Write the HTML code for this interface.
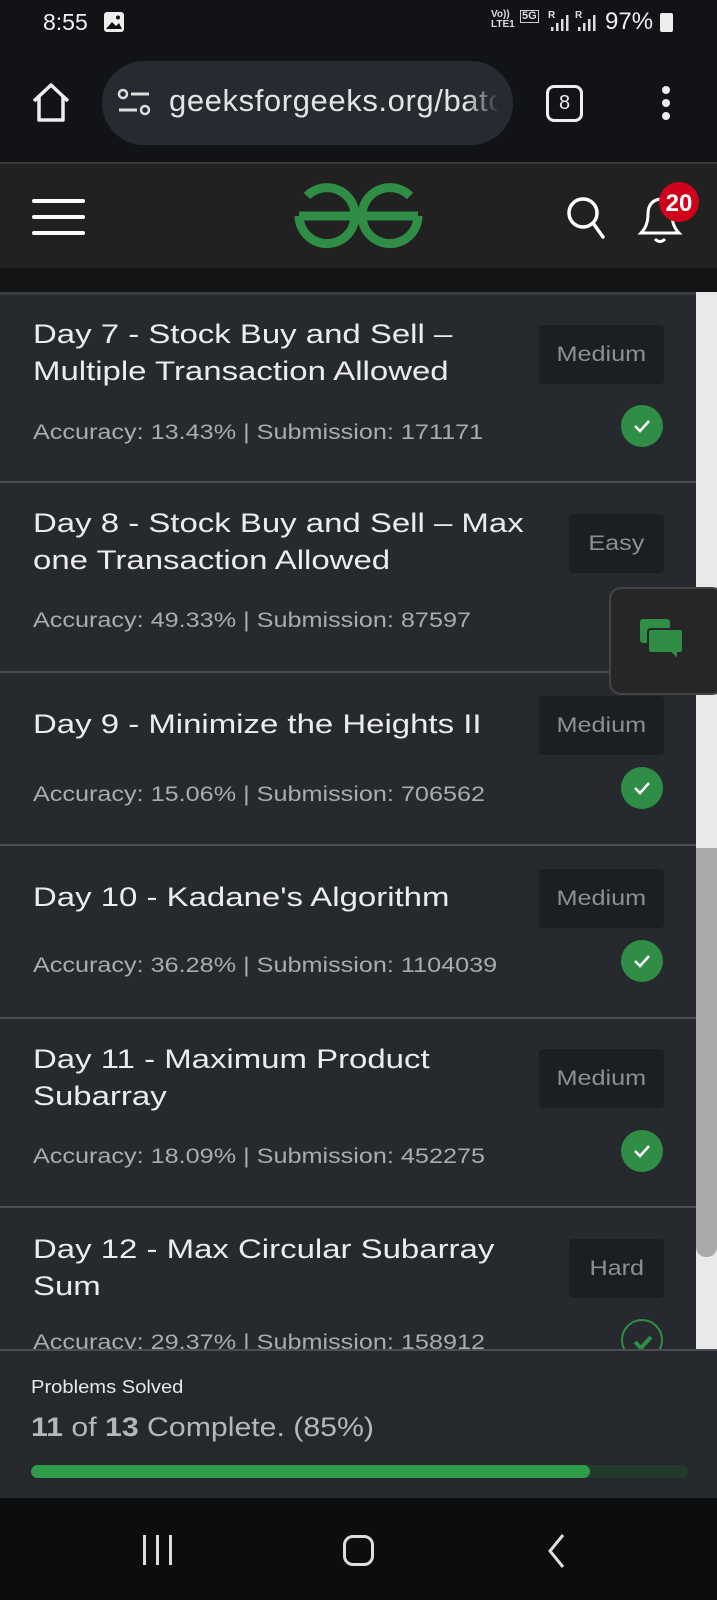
<!DOCTYPE html>
<html><head><meta charset="utf-8"><style>
*{margin:0;padding:0;box-sizing:border-box}
body{width:717px;height:1600px;background:#131416;position:relative;overflow:hidden;font-family:"Liberation Sans",sans-serif;color:#e6e6e6}
.abs{position:absolute}
.card{position:absolute;left:0;width:696px;background:#262a2f;border-bottom:2px solid #4a4d52}
.t{position:absolute;left:33px;font-size:27px;line-height:37px;color:#ececec;white-space:nowrap;transform:scaleX(1.22);transform-origin:0 0}
.acc{position:absolute;left:33px;font-size:21px;color:#a9abae;white-space:nowrap;transform:scaleX(1.2);transform-origin:0 0}
.badge{position:absolute;background:#1b1e22;border-radius:4px;color:#8c8f93;font-size:21px;display:flex;align-items:center;justify-content:center;height:59px}
.badge span{display:inline-block;transform:scaleX(1.2)}
.chk{position:absolute;width:42px;height:42px;border-radius:50%;background:#2f8d46;left:621px}
.chk svg{position:absolute;left:0;top:0}
</style></head><body>
<!-- status bar -->
<div class="abs" style="left:0;top:0;width:717px;height:46px;background:#111316"></div>
<div class="abs" style="left:43px;top:9px;font-size:23px;color:#f0f0f0">8:55</div>
<svg class="abs" style="left:103px;top:11px" width="22" height="22"><rect x="1" y="1" width="20" height="20" rx="3" fill="#eee"/><path d="M3 18 L9 11 L13 15 L16 12 L19 18Z" fill="#111"/><circle cx="15" cy="6.5" r="2" fill="#111"/></svg>
<div class="abs" style="left:491px;top:10px;font-size:10px;line-height:10px;color:#ddd;font-weight:bold">Vo))<br>LTE1</div>
<div class="abs" style="left:520px;top:10px;font-size:11px;color:#ddd;border:1px solid #ccc;line-height:11px;padding:0 1px;font-weight:bold">5G</div>
<div class="abs" style="left:548px;top:10px;font-size:10px;color:#ddd;font-weight:bold">R</div>
<svg class="abs" style="left:549px;top:14px" width="20" height="18"><rect x="2" y="13" width="2.5" height="4" fill="#ddd"/><rect x="7" y="9" width="2.5" height="8" fill="#ddd"/><rect x="12" y="5" width="2.5" height="12" fill="#ddd"/><rect x="17" y="1" width="2.5" height="16" fill="#ddd"/></svg>
<div class="abs" style="left:575px;top:10px;font-size:10px;color:#ddd;font-weight:bold">R</div>
<svg class="abs" style="left:576px;top:14px" width="20" height="18"><rect x="2" y="13" width="2.5" height="4" fill="#ddd"/><rect x="7" y="9" width="2.5" height="8" fill="#ddd"/><rect x="12" y="5" width="2.5" height="12" fill="#ddd"/><rect x="17" y="1" width="2.5" height="16" fill="#ddd"/></svg>
<div class="abs" style="left:605px;top:8px;font-size:24px;color:#f0f0f0">97%</div>
<div class="abs" style="left:660px;top:13px;width:13px;height:19px;background:#eee;border-radius:2px"></div>
<!-- browser bar -->
<div class="abs" style="left:0;top:46px;width:717px;height:116px;background:#111316"></div>
<svg class="abs" style="left:30px;top:82px" width="42" height="42"><path d="M4 19 L21 3 L38 19 M9 15 V38 H33 V15" fill="none" stroke="#eee" stroke-width="3.5" stroke-linejoin="round"/></svg>
<div class="abs" style="left:102px;top:61px;width:411px;height:84px;border-radius:42px;background:#262a31"></div>
<svg class="abs" style="left:117px;top:88px" width="36" height="30"><circle cx="6" cy="6" r="4" fill="none" stroke="#ddd" stroke-width="2.5"/><path d="M14 6 H32 M2 22 H20" stroke="#ddd" stroke-width="3"/><circle cx="28" cy="22" r="4" fill="none" stroke="#ddd" stroke-width="2.5"/></svg>
<div class="abs" style="left:169px;top:83px;width:330px;overflow:hidden;white-space:nowrap;font-size:31px;letter-spacing:0.6px;color:#e4e4e4;-webkit-mask-image:linear-gradient(90deg,#000 90%,transparent)">geeksforgeeks.org/batch</div>
<div class="abs" style="left:546px;top:85px;width:37px;height:37px;border:3.5px solid #eee;border-radius:8px;color:#eee;font-size:20px;text-align:center;line-height:30px">8</div>
<div class="abs" style="left:662px;top:86px;width:8px;height:8px;border-radius:50%;background:#eee"></div>
<div class="abs" style="left:662px;top:99px;width:8px;height:8px;border-radius:50%;background:#eee"></div>
<div class="abs" style="left:662px;top:112px;width:8px;height:8px;border-radius:50%;background:#eee"></div>
<!-- gfg header -->
<div class="abs" style="left:0;top:162px;width:717px;height:2px;background:#3a3b3e"></div>
<div class="abs" style="left:0;top:164px;width:717px;height:104px;background:#212121"></div>
<div class="abs" style="left:32px;top:199px;width:53px;height:4px;background:#fff;border-radius:2px"></div>
<div class="abs" style="left:32px;top:215px;width:53px;height:4px;background:#fff;border-radius:2px"></div>
<div class="abs" style="left:32px;top:231px;width:53px;height:4px;background:#fff;border-radius:2px"></div>
<svg class="abs" style="left:0;top:0" width="717" height="270"><g fill="none" stroke="#2f8d46" stroke-width="9"><path d="M307,196 A28,28 0 1 1 299,216"/><path d="M410,196 A28,28 0 1 0 418,216"/><path d="M299,216 H418"/></g>
<circle cx="583" cy="213" r="14" fill="none" stroke="#fff" stroke-width="3.5"/><path d="M593 223 L603 237" stroke="#fff" stroke-width="3.5" stroke-linecap="round"/>
<path d="M641 233 Q648 226 648 214 Q648 201 660 199 Q672 201 672 214 Q672 226 679 233 Z" fill="none" stroke="#fff" stroke-width="3"/><path d="M655 239 Q660 244 665 239" fill="none" stroke="#fff" stroke-width="3"/>
<circle cx="679" cy="202" r="20" fill="#d0021b"/><text x="679" y="211" font-family="Liberation Sans" font-weight="bold" font-size="24" fill="#fff" text-anchor="middle">20</text></svg>
<!-- cards -->
<div class="card" style="top:292px;height:191px;border-top:3px solid #3a3d41"></div>
<div class="t" style="top:316px">Day 7 - Stock Buy and Sell –<br>Multiple Transaction Allowed</div>
<div class="badge" style="left:539px;top:325px;width:125px"><span>Medium</span></div>
<div class="acc" style="top:421px">Accuracy: 13.43% | Submission: 171171</div>
<div class="chk" style="left:621px;top:405px"><svg width="42" height="42"><path d="M14 21 L19 26 L28 16" fill="none" stroke="#fff" stroke-width="2.5"/></svg></div>

<div class="card" style="top:483px;height:190px"></div>
<div class="t" style="top:505px">Day 8 - Stock Buy and Sell – Max<br>one Transaction Allowed</div>
<div class="badge" style="left:569px;top:514px;width:95px"><span>Easy</span></div>
<div class="acc" style="top:609px">Accuracy: 49.33% | Submission: 87597</div>

<div class="card" style="top:673px;height:173px"></div>
<div class="t" style="top:706px">Day 9 - Minimize the Heights II</div>
<div class="badge" style="left:539px;top:696px;width:125px"><span>Medium</span></div>
<div class="acc" style="top:783px">Accuracy: 15.06% | Submission: 706562</div>
<div class="chk" style="top:767px"><svg width="42" height="42"><path d="M14 21 L19 26 L28 16" fill="none" stroke="#fff" stroke-width="2.5"/></svg></div>

<div class="card" style="top:846px;height:173px"></div>
<div class="t" style="top:879px">Day 10 - Kadane's Algorithm</div>
<div class="badge" style="left:539px;top:869px;width:125px"><span>Medium</span></div>
<div class="acc" style="top:954px">Accuracy: 36.28% | Submission: 1104039</div>
<div class="chk" style="top:940px"><svg width="42" height="42"><path d="M14 21 L19 26 L28 16" fill="none" stroke="#fff" stroke-width="2.5"/></svg></div>

<div class="card" style="top:1019px;height:189px"></div>
<div class="t" style="top:1041px">Day 11 - Maximum Product<br>Subarray</div>
<div class="badge" style="left:539px;top:1049px;width:125px"><span>Medium</span></div>
<div class="acc" style="top:1145px">Accuracy: 18.09% | Submission: 452275</div>
<div class="chk" style="top:1130px"><svg width="42" height="42"><path d="M14 21 L19 26 L28 16" fill="none" stroke="#fff" stroke-width="2.5"/></svg></div>

<div class="card" style="top:1208px;height:160px;border:none"></div>
<div class="t" style="top:1231px">Day 12 - Max Circular Subarray<br>Sum</div>
<div class="badge" style="left:569px;top:1239px;width:95px"><span>Hard</span></div>
<div class="acc" style="top:1331px">Accuracy: 29.37% | Submission: 158912</div>
<div class="abs" style="left:621px;top:1319px;width:42px;height:42px;border-radius:50%;border:2px solid #2f8d46"><svg width="40" height="40"><path d="M12 21 L18 27 L28 16" fill="none" stroke="#2f8d46" stroke-width="4"/></svg></div>
<!-- scrollbar -->
<div class="abs" style="left:696px;top:292px;width:21px;height:1057px;background:#e9e9e9"></div>
<div class="abs" style="left:696px;top:848px;width:21px;height:409px;background:#a9a9a9;border-radius:0 0 10px 10px"></div>
<!-- chat widget -->
<div class="abs" style="left:609px;top:587px;width:115px;height:108px;background:#262626;border:2px solid #444;border-radius:12px"></div>
<svg class="abs" style="left:638px;top:615px" width="50" height="50"><rect x="2" y="4" width="30" height="24" rx="3" fill="#2f8d46"/><path d="M13 14 h29 a3 3 0 0 1 3 3 v18 a3 3 0 0 1 -3 3 h-2 v7 l-7 -7 h-20 a3 3 0 0 1 -3 -3 v-18 a3 3 0 0 1 3 -3z" fill="#2f8d46" stroke="#262626" stroke-width="2"/></svg>
<!-- bottom panel -->
<div class="abs" style="left:0;top:1349px;width:717px;height:149px;background:#25282c;border-top:2px solid #4a4d52"></div>
<div class="abs" style="left:31px;top:1377px;font-size:18px;color:#e8e8e8;white-space:nowrap;transform:scaleX(1.12);transform-origin:0 0">Problems Solved</div>
<div class="abs" style="left:31px;top:1412px;font-size:27px;color:#b5b7ba;white-space:nowrap;transform:scaleX(1.12);transform-origin:0 0"><b>11</b> of <b>13</b> Complete. (85%)</div>
<div class="abs" style="left:31px;top:1465px;width:657px;height:13px;border-radius:7px;background:#213a2a"></div>
<div class="abs" style="left:31px;top:1465px;width:559px;height:13px;border-radius:7px;background:#2f9c4a"></div>
<!-- nav bar -->
<div class="abs" style="left:0;top:1498px;width:717px;height:102px;background:#0b0d0f"></div>
<div class="abs" style="left:143px;top:1535px;width:3px;height:30px;background:#ddd"></div>
<div class="abs" style="left:156px;top:1535px;width:3px;height:30px;background:#ddd"></div>
<div class="abs" style="left:169px;top:1535px;width:3px;height:30px;background:#ddd"></div>
<div class="abs" style="left:343px;top:1535px;width:31px;height:31px;border:3px solid #ddd;border-radius:10px"></div>
<svg class="abs" style="left:545px;top:1532px" width="24" height="38"><path d="M18 3 L5 19 L18 35" fill="none" stroke="#ddd" stroke-width="3"/></svg>
</body></html>
